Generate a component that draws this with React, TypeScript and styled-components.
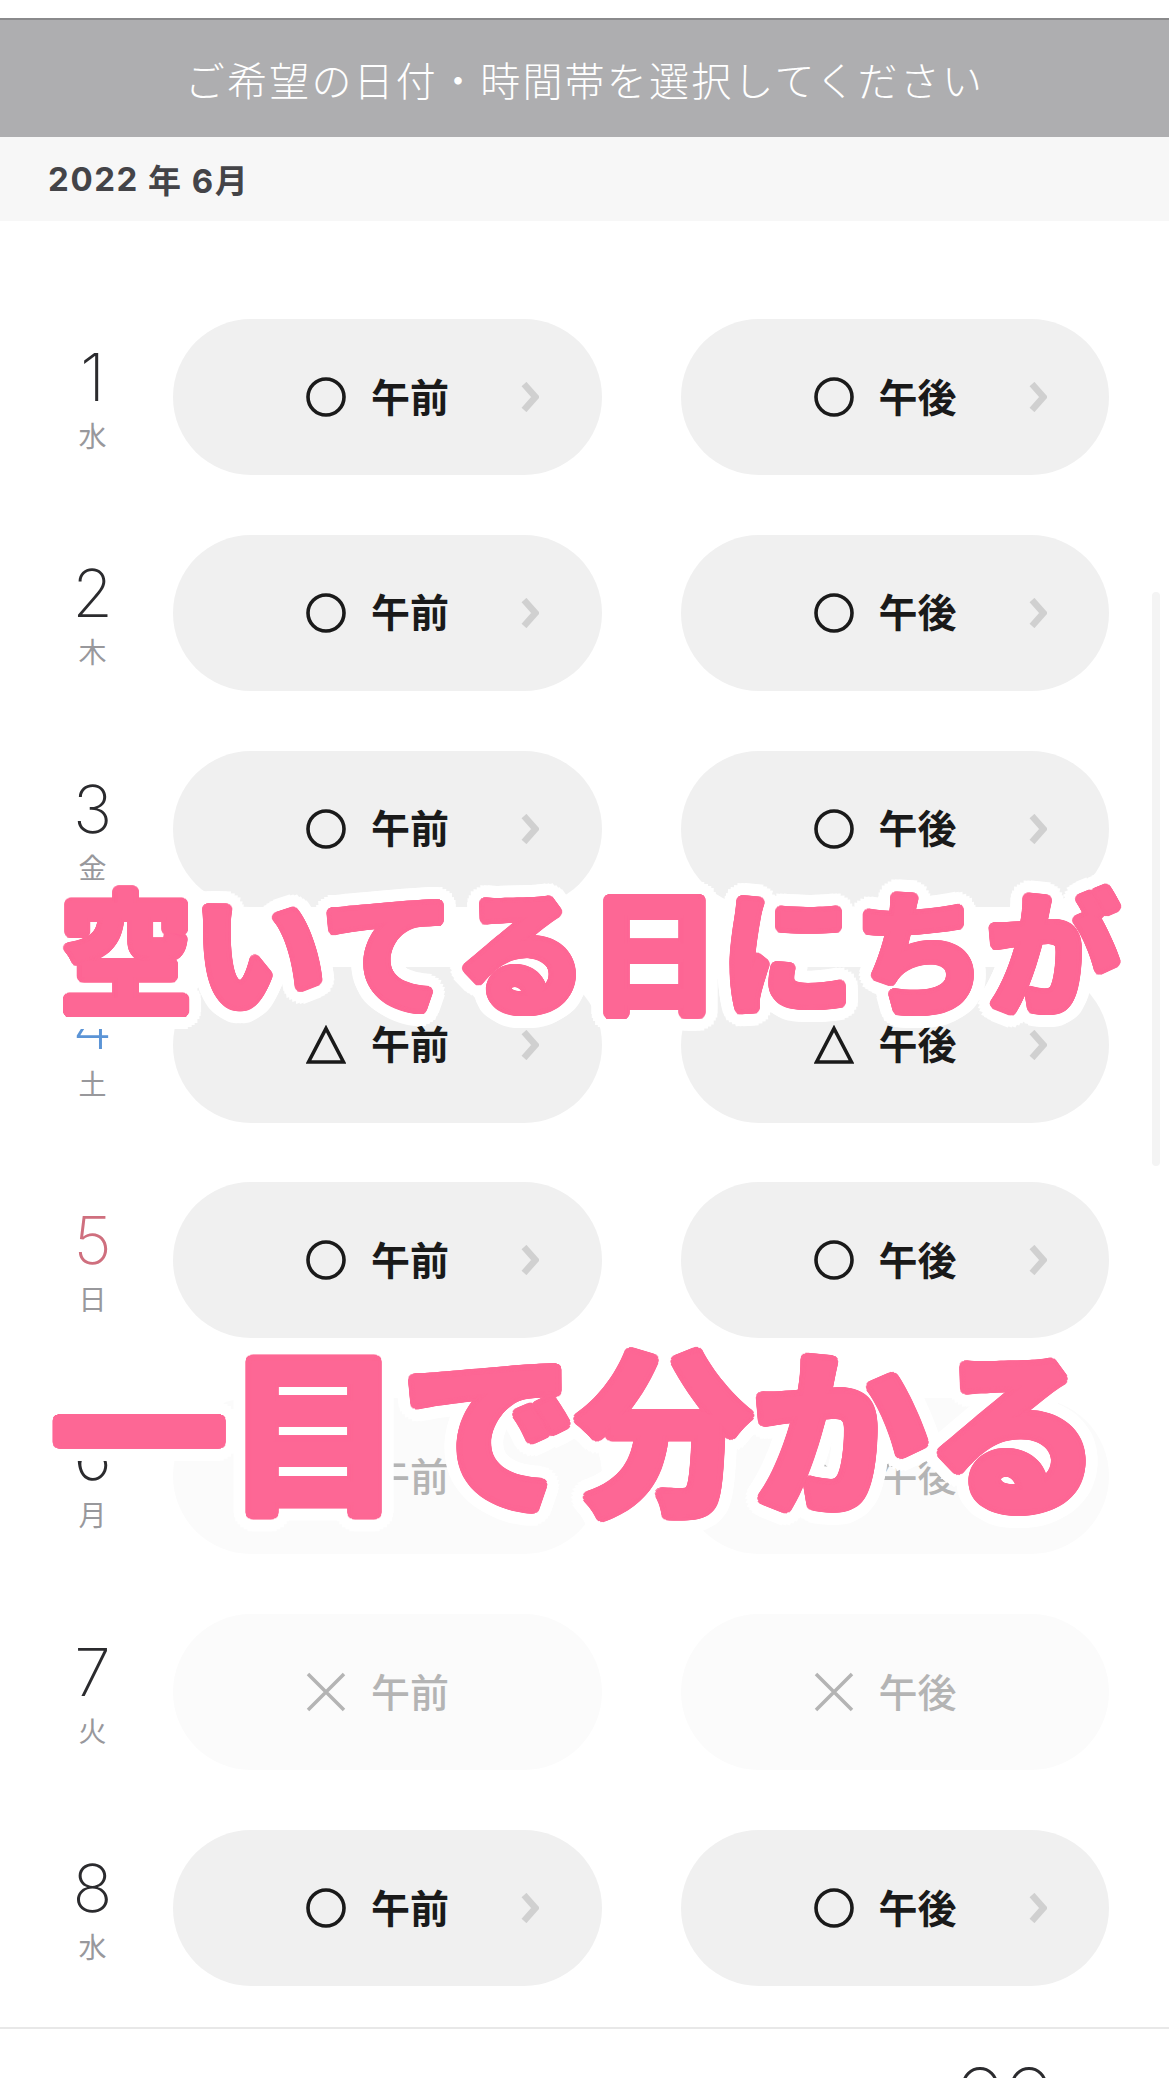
import styled, { createGlobalStyle } from "styled-components";

const GlobalStyle = createGlobalStyle`
  html, body { margin: 0; padding: 0; background: #fff; }
  body { font-family: "Inter", "Noto Sans CJK JP", sans-serif; }
`;

// fattens the caption glyphs with round corners, which text-stroke can't do
const ring = (r: number, color: string) =>
  Array.from({ length: 28 }, (_, i) => {
    const a = (i / 28) * Math.PI * 2;
    return `${(Math.cos(a) * r).toFixed(1)}px ${(Math.sin(a) * r).toFixed(1)}px 0 ${color}`;
  }).join(", ");

const captionShadow = (fat: number) =>
  [
    ring(fat / 2, "#fd6795"),
    ring(fat, "#fd6795"),
    ring(fat + 3, "#fff"),
    ring(fat + 6, "#fff"),
    ring(fat + 9, "#fff"),
    ring(fat + 12, "#fff"),
  ].join(", ");

const Page = styled.div`
  position: relative;
  width: 1169px;
  height: 2078px;
  overflow: hidden;
  background: #fff;
  padding-top: 18px;
  box-sizing: border-box;
`;

const Title = styled.div`
  height: 119px;
  box-sizing: border-box;
  display: flex;
  align-items: center;
  justify-content: center;
  background: #aeaeb0;
  border-top: 2px solid #8a8a8c;
  color: #fff;
  font-family: "Noto Sans CJK JP", sans-serif;
  font-size: 40px;
  font-weight: 300;
  letter-spacing: 2.2px;
`;

const MonthBar = styled.div`
  height: 84px;
  padding-left: 48px;
  display: flex;
  align-items: center;
  gap: 9px;
  background: #f7f7f7;
  color: #444448;
  font-family: "Inter", "Noto Sans CJK JP", sans-serif;
  font-size: 33px;
  font-weight: 700;
  letter-spacing: 1.6px;
`;

const List = styled.div`
  display: flex;
  flex-direction: column;
  gap: 59.86px;
  padding-top: 98px;
`;

const Row = styled.div`
  display: flex;
  gap: 79px;
  padding-right: 60px;
`;

const Day = styled.div`
  width: 173px;
  margin-right: -79px;
  padding-left: 12px;
  box-sizing: border-box;
  display: flex;
  flex-direction: column;
  align-items: center;
  padding-top: 26px;
`;

const DayNumber = styled.div<{ $tone?: string }>`
  font-family: "Inter", sans-serif;
  font-size: 66px;
  font-weight: 250;
  line-height: 64px;
  color: ${(p) => p.$tone || "#2b2b2e"};
`;

const Weekday = styled.div`
  margin-top: 9px;
  font-family: "Noto Sans CJK JP", sans-serif;
  font-size: 28px;
  line-height: 34px;
  color: #98989c;
`;

const Slot = styled.div<{ $off?: boolean }>`
  flex: 1;
  height: 156px;
  border-radius: 78px;
  display: flex;
  align-items: center;
  padding-left: 133px;
  box-sizing: border-box;
  background: ${(p) => (p.$off ? "#fbfbfb" : "#f0f0f0")};
  color: ${(p) => (p.$off ? "#b4b4b4" : "#1a1a1a")};
`;

const SlotLabel = styled.span<{ $off?: boolean }>`
  margin: -5px 0 0 25px;
  font-family: "Noto Sans CJK JP", sans-serif;
  font-size: 39px;
  font-weight: ${(p) => (p.$off ? 500 : 700)};
  line-height: 44px;
`;

const MarkIcon = styled.svg`
  width: 40px;
  height: 40px;
  flex: none;
`;

const Chevron = styled.svg`
  width: 18px;
  height: 30px;
  margin-left: 72px;
  flex: none;
`;

const Divider = styled.div`
  height: 2px;
  margin-top: 41px;
  background: #e8e8e8;
`;

const Footer = styled.div`
  display: flex;
  justify-content: flex-end;
  gap: 13px;
  padding: 38px 122px 0 0;
`;

const FooterRing = styled.div`
  width: 36px;
  height: 36px;
  flex: none;
  box-sizing: border-box;
  border: 3px solid #2b2b2e;
  border-radius: 50%;
`;

const ScrollThumb = styled.div`
  position: absolute;
  left: 1152px;
  top: 592px;
  width: 8px;
  height: 574px;
  border-radius: 4px;
  background: #f4f4f4;
`;

const Caption = styled.div<{ $top: number; $left: number; $size: number; $space: number; $fat: number }>`
  position: absolute;
  top: ${(p) => p.$top}px;
  left: ${(p) => p.$left}px;
  font-family: "Noto Sans CJK JP", sans-serif;
  font-size: ${(p) => p.$size}px;
  font-weight: 700;
  letter-spacing: ${(p) => p.$space}px;
  line-height: 1;
  white-space: nowrap;
  color: #fd6795;
  text-shadow: ${(p) => captionShadow(p.$fat)};
`;

type Mark = "circle" | "triangle" | "cross";

const days: { n: number; w: string; mark: Mark; tone?: string }[] = [
  { n: 1, w: "水", mark: "circle" },
  { n: 2, w: "木", mark: "circle" },
  { n: 3, w: "金", mark: "circle" },
  { n: 4, w: "土", mark: "triangle", tone: "#5b94d6" },
  { n: 5, w: "日", mark: "circle", tone: "#cf6f7e" },
  { n: 6, w: "月", mark: "cross" },
  { n: 7, w: "火", mark: "cross" },
  { n: 8, w: "水", mark: "circle" },
];

function SlotMark({ kind }: { kind: Mark }) {
  return (
    <MarkIcon viewBox="0 0 40 40" fill="none" stroke="currentColor" strokeWidth={kind === "cross" ? 3.5 : 3.6}>
      {kind === "circle" && <circle cx="20" cy="20" r="18" />}
      {kind === "triangle" && <path d="M20 3.5 37.5 37H2.5Z" />}
      {kind === "cross" && <path d="M2 2 38 38M38 2 2 38" />}
    </MarkIcon>
  );
}

function TimeSlot({ kind, label }: { kind: Mark; label: string }) {
  const off = kind === "cross";
  return (
    <Slot $off={off}>
      <SlotMark kind={kind} />
      <SlotLabel $off={off}>{label}</SlotLabel>
      {!off && (
        <Chevron viewBox="0 0 18 30" fill="none" stroke="#d0d0d0" strokeWidth="6.5">
          <path d="M3 2 14.5 15 3 28" />
        </Chevron>
      )}
    </Slot>
  );
}

export default function App() {
  return (
    <Page>
      <GlobalStyle />
      <Title>ご希望の日付・時間帯を選択してください</Title>
      <MonthBar>
        <span>2022</span>
        <span>年</span>
        <span>6月</span>
      </MonthBar>
      <List>
        {days.map((d) => (
          <Row key={d.n}>
            <Day>
              <DayNumber $tone={d.tone}>{d.n}</DayNumber>
              <Weekday>{d.w}</Weekday>
            </Day>
            <TimeSlot kind={d.mark} label="午前" />
            <TimeSlot kind={d.mark} label="午後" />
          </Row>
        ))}
      </List>
      <Divider />
      <Footer>
        <FooterRing />
        <FooterRing />
      </Footer>
      <ScrollThumb />
      <Caption $top={880} $left={60} $size={132} $space={1} $fat={5}>
        空いてる日にちが
      </Caption>
      <Caption $top={1336} $left={52} $size={174} $space={1} $fat={6}>
        一目で分かる
      </Caption>
    </Page>
  );
}
